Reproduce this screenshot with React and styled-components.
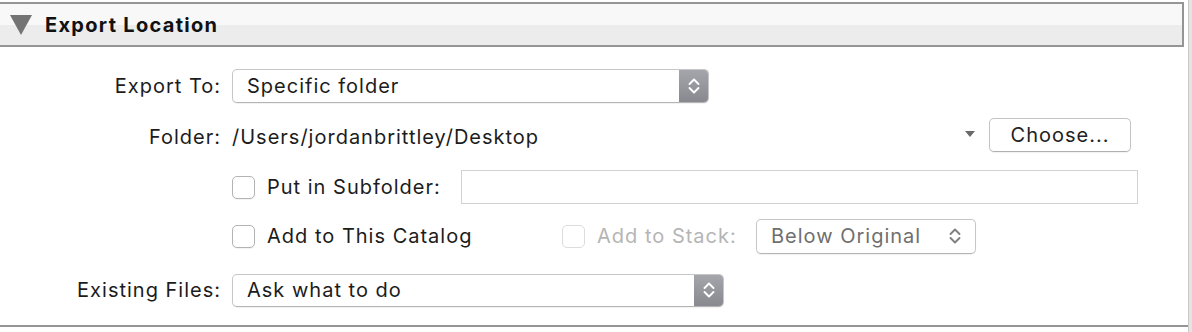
import React from 'react';
import styled, { createGlobalStyle } from 'styled-components';

const GlobalStyle = createGlobalStyle`
  body {
    margin: 0;
    background: #fff;
    font-family: Inter, "Noto Sans", "Liberation Sans", sans-serif;
    -webkit-font-smoothing: antialiased;
  }
`;

const Frame = styled.div`
  display: flex;
  width: 1192px;
  height: 332px;
`;

const Panel = styled.div`
  width: 1188px;
  padding-top: 2px;
`;

const Scrollbar = styled.div`
  flex: 1;
  background: #e4e4e4;
  border-left: 1px solid #c9c9c9;
`;

const Header = styled.div`
  display: flex;
  align-items: center;
  gap: 13px;
  width: 1172px;
  height: 41px;
  padding-left: 10px;
  border: 2px solid #959595;
  border-left: none;
  background: linear-gradient(#f8f8f8 50%, #ececec 50%);
`;

const Title = styled.span`
  font-size: 20px;
  font-weight: 700;
  letter-spacing: 1.3px;
  color: #111;
`;

const Body = styled.div`
  display: grid;
  grid-template-columns: 220px 1fr;
  grid-template-rows: 50px 51px 50px 48px 60px;
  column-gap: 12px;
  align-items: center;
  padding: 14px 0 5px;
  border-bottom: 2px solid #959595;
  font-size: 20px;
  letter-spacing: 1px;
`;

const Label = styled.div`
  text-align: right;
  color: #1c1c1c;
  margin-right: -1px;
`;

const Cell = styled.div`
  display: flex;
  align-items: center;
  padding-right: ${({ $right }) => $right || 0}px;
`;

const Select = styled.div`
  display: flex;
  align-items: stretch;
  width: ${({ $width }) => $width}px;
  height: ${({ $height }) => $height || 33}px;
  box-sizing: border-box;
  border: 1px solid #c6c6c6;
  border-bottom-color: #b4b4b4;
  border-radius: 5px;
  background: #fff;
  box-shadow: 0 1px 1px rgba(0, 0, 0, 0.06);
  overflow: hidden;
`;

const SelectText = styled.span`
  flex: 1;
  display: flex;
  align-items: center;
  padding-left: 14px;
  color: ${({ $muted }) => ($muted ? '#6f6f6f' : '#1c1c1c')};
`;

const Stepper = styled.span`
  width: 29px;
  display: flex;
  align-items: center;
  justify-content: center;
  background: ${({ $plain }) =>
    $plain ? 'transparent' : 'linear-gradient(#a5a5ac, #88888f)'};
  padding-right: ${({ $plain }) => ($plain ? '6px' : '0')};
`;

const PathText = styled.span`
  flex: 1;
  color: #1c1c1c;
`;

const Caret = styled.span`
  width: 0;
  height: 0;
  border-left: 5px solid transparent;
  border-right: 5px solid transparent;
  border-top: 6px solid #6a6a6a;
  margin-right: 14px;
  margin-top: -6px;
`;

const Button = styled.button`
  width: 142px;
  height: 34px;
  margin-top: -4px;
  border: 1px solid #c4c4c4;
  border-bottom-color: #b0b0b0;
  border-radius: 5px;
  background: #fff;
  box-shadow: 0 1px 1px rgba(0, 0, 0, 0.06);
  font-family: inherit;
  font-size: 20px;
  letter-spacing: 1px;
  color: #222;
  padding: 0;
`;

const Check = styled.label`
  display: flex;
  align-items: center;
  gap: 12px;
  width: ${({ $width }) => ($width ? `${$width}px` : 'auto')};
  color: ${({ $disabled }) => ($disabled ? '#b5b5b5' : '#1c1c1c')};
`;

const Box = styled.span`
  width: 23px;
  height: 23px;
  box-sizing: border-box;
  border: 1px solid ${({ $disabled }) => ($disabled ? '#dcdcdc' : '#b3b3b3')};
  border-radius: 5px;
  background: #fff;
  box-shadow: ${({ $disabled }) =>
    $disabled ? 'none' : '0 1px 1px rgba(0, 0, 0, 0.05)'};
`;

const TextField = styled.div`
  flex: 1;
  height: 34px;
  box-sizing: border-box;
  border: 1px solid #d2d2d2;
  background: #fff;
`;

function Chevrons({ color = '#fff' }) {
  return (
    <svg width="12" height="20" viewBox="0 0 12 20">
      <polyline
        points="1.5,8 6,3.5 10.5,8"
        fill="none"
        stroke={color}
        strokeWidth="1.9"
        strokeLinecap="round"
        strokeLinejoin="round"
      />
      <polyline
        points="1.5,12 6,16.5 10.5,12"
        fill="none"
        stroke={color}
        strokeWidth="1.9"
        strokeLinecap="round"
        strokeLinejoin="round"
      />
    </svg>
  );
}

function Disclosure() {
  return (
    <svg width="22" height="20" viewBox="0 0 22 20">
      <polygon points="0,0 22,0 11,20" fill="#747474" />
    </svg>
  );
}

export default function App() {
  return (
    <>
      <GlobalStyle />
      <Frame>
        <Panel>
          <Header>
            <Disclosure />
            <Title>Export Location</Title>
          </Header>
          <Body>
            <Label>Export To:</Label>
            <Cell>
              <Select $width={477} $height={34}>
                <SelectText>Specific folder</SelectText>
                <Stepper>
                  <Chevrons />
                </Stepper>
              </Select>
            </Cell>

            <Label>Folder:</Label>
            <Cell $right={57}>
              <PathText>/Users/jordanbrittley/Desktop</PathText>
              <Caret />
              <Button>Choose...</Button>
            </Cell>

            <span />
            <Cell $right={50}>
              <Check $width={229}>
                <Box />
                Put in Subfolder:
              </Check>
              <TextField />
            </Cell>

            <span />
            <Cell>
              <Check $width={330}>
                <Box />
                Add to This Catalog
              </Check>
              <Check $disabled $width={194}>
                <Box $disabled />
                Add to Stack:
              </Check>
              <Select $width={220} $height={35}>
                <SelectText $muted>Below Original</SelectText>
                <Stepper $plain>
                  <Chevrons color="#808080" />
                </Stepper>
              </Select>
            </Cell>

            <Label>Existing Files:</Label>
            <Cell>
              <Select $width={492} $height={33}>
                <SelectText>Ask what to do</SelectText>
                <Stepper>
                  <Chevrons />
                </Stepper>
              </Select>
            </Cell>
          </Body>
        </Panel>
        <Scrollbar />
      </Frame>
    </>
  );
}
